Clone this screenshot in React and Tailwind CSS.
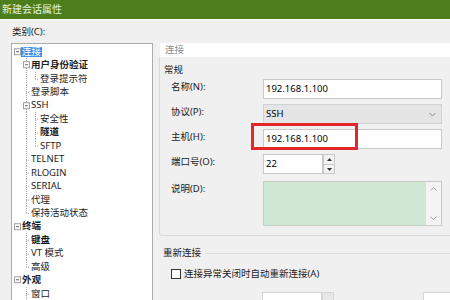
import React from "react";

const ROW_H = 13.44;

// tree rows: lvl, text, bold, box, col1/col2 = "full" | "last" | null
const rows = [
  { lvl: 0, text: "连接", box: true, selected: true },
  { lvl: 1, text: "用户身份验证", bold: true, box: true, col1: "full" },
  { lvl: 2, text: "登录提示符", col1: "full", col2: "last" },
  { lvl: 1, text: "登录脚本", col1: "full" },
  { lvl: 1, text: "SSH", box: true, col1: "full" },
  { lvl: 2, text: "安全性", col1: "full", col2: "full" },
  { lvl: 2, text: "隧道", bold: true, col1: "full", col2: "full" },
  { lvl: 2, text: "SFTP", col1: "full", col2: "last" },
  { lvl: 1, text: "TELNET", col1: "full" },
  { lvl: 1, text: "RLOGIN", col1: "full" },
  { lvl: 1, text: "SERIAL", col1: "full" },
  { lvl: 1, text: "代理", col1: "full" },
  { lvl: 1, text: "保持活动状态", col1: "last" },
  { lvl: 0, text: "终端", bold: true, box: true },
  { lvl: 1, text: "键盘", bold: true, col1: "full" },
  { lvl: 1, text: "VT 模式", col1: "full" },
  { lvl: 1, text: "高级", col1: "last" },
  { lvl: 0, text: "外观", bold: true, box: true },
  { lvl: 1, text: "窗口", col1: "full" },
];

const WIDTHS = [9, 18, 27];
const COLS = [5, 14, 23];

function Lines({ r }) {
  const w = WIDTHS[r.lvl];
  const mid = ROW_H / 2;
  const line = { stroke: "#a6a6a6", strokeWidth: 1, strokeDasharray: "1 1" };
  const vert = (x, kind) =>
    kind ? <line x1={x + 0.5} y1={0} x2={x + 0.5} y2={kind === "full" ? ROW_H : mid} {...line} /> : null;
  const own = COLS[r.lvl];
  return (
    <svg width={w} height={ROW_H} className="shrink-0">
      {vert(COLS[1], r.col1)}
      {vert(COLS[2], r.col2)}
      {!r.box && r.lvl > 0 && <line x1={own} y1={mid + 0.5} x2={w} y2={mid + 0.5} {...line} />}
      {r.box && (
        <g>
          <rect x={own - 2.5} y={mid - 3} width={6} height={6} fill="#fff" stroke="#a0a0a0" />
          <line x1={own - 1} y1={mid} x2={own + 2} y2={mid} stroke="#6a6a6a" />
        </g>
      )}
    </svg>
  );
}

function Tree() {
  return (
    <div className="flex-1 border border-[#acacac] bg-white pt-px">
      {rows.map((r, i) => (
        <div key={i} className="flex items-center h-[13.44px] whitespace-nowrap">
          <Lines r={r} />
          <span
            className={
              "px-px leading-[10px] " +
              (r.bold ? "font-bold " : "") +
              (r.selected ? "bg-[#3f8fe6] text-white" : "text-[#1c1c1c]")
            }
          >
            {r.text}
          </span>
        </div>
      ))}
    </div>
  );
}

function Field({ label, children, className = "" }) {
  return (
    <div className={"flex " + className}>
      <div className="w-[103px] shrink-0 pl-[11px] h-[20px] flex items-center pb-[4px] text-[#222]">{label}</div>
      {children}
    </div>
  );
}

const box = "h-[20px] border border-[#c9c9c9] bg-white flex items-center pl-[2px]";

export default function App() {
  return (
    <div className="w-[450px] h-[300px] overflow-hidden bg-[#f0f0f0] text-[9.5px] flex flex-col font-['Noto_Sans','Noto_Sans_CJK_SC',sans-serif]">
      <div className="h-[19px] shrink-0 bg-[#4d7e1b] text-[#eaf3dc] text-[10px] pl-[2px] flex items-center">新建会话属性</div>
      <div className="h-px shrink-0 bg-white" />

      <div className="flex flex-1 min-h-0">
        {/* left: category tree */}
        <div className="w-[153px] shrink-0 pl-[11px] flex flex-col">
          <div className="mt-[5px] h-[14px] leading-[14px] text-[#222] pl-[1px]">类别(C):</div>
          <div className="mt-[4px] flex-1 flex flex-col">
            <Tree />
          </div>
        </div>

        {/* right: properties */}
        <div className="ml-[6px] flex-1 flex flex-col">
          <div className="mt-[23px] ml-px h-[19px] bg-white text-[#8c8c8c] pl-[5px] flex items-center">连接</div>

          <div className="border-l border-b border-[#d9d9d9] rounded-bl-[3px] pb-[9px]">
            <div className="mt-[6px] h-[14px] leading-[14px] pl-[4px] text-[#222]">常规</div>

            <Field label="名称(N):" className="mt-[2px]">
              <div className={box + " w-[179px]"}>192.168.1.100</div>
            </Field>

            <Field label="协议(P):" className="mt-[5px]">
              <div className="w-[179px] h-[20px] border border-[#d2d2d2] bg-[#e5e5e5] flex items-center justify-between pl-[2px] pr-[5px]">
                <span>SSH</span>
                <svg width="7" height="5" viewBox="0 0 7 5">
                  <path d="M0.5 1 L3.5 4 L6.5 1" fill="none" stroke="#8a8a8a" strokeWidth="1" />
                </svg>
              </div>
            </Field>

            <Field label="主机(H):" className="mt-[5px]">
              <div className="relative">
                <div className={box + " w-[179px]"}>192.168.1.100</div>
                <div className="absolute left-[-12px] top-[-6px] w-[107px] h-[27px] border-[3px] border-[#e3262b]" />
              </div>
            </Field>

            <Field label="端口号(O):" className="mt-[5px]">
              <div className="flex">
                <div className={box + " w-[60px]"}>22</div>
                <div className="w-[12px] h-[20px] flex flex-col">
                  <div className="flex-1 border border-[#c9c9c9] bg-[#f3f3f3] flex items-center justify-center">
                    <svg width="5" height="3" viewBox="0 0 5 3"><path d="M0 3 L2.5 0 L5 3 Z" fill="#333" /></svg>
                  </div>
                  <div className="flex-1 border border-t-0 border-[#c9c9c9] bg-[#f3f3f3] flex items-center justify-center">
                    <svg width="5" height="3" viewBox="0 0 5 3"><path d="M0 0 L2.5 3 L5 0 Z" fill="#333" /></svg>
                  </div>
                </div>
              </div>
            </Field>

            <div className="flex mt-[7px]">
              <div className="w-[103px] shrink-0 pl-[11px] pt-[1px] text-[#222]">说明(D):</div>
              <div className="w-[179px] h-[45px] border border-[#c9c9c9] bg-[#cfe8d3] flex justify-end">
                <div className="w-[15px] h-full bg-[#f4f4f4] flex flex-col items-center justify-between py-[5px]">
                  <svg width="7" height="4" viewBox="0 0 7 4"><path d="M0.5 3.5 L3.5 0.5 L6.5 3.5" fill="none" stroke="#a0a0a0" /></svg>
                  <svg width="7" height="4" viewBox="0 0 7 4"><path d="M0.5 0.5 L3.5 3.5 L6.5 0.5" fill="none" stroke="#a0a0a0" /></svg>
                </div>
              </div>
            </div>
          </div>

          <div className="mt-[10px] h-[14px] flex items-center pl-[4px] gap-[4px]">
            <span className="text-[#222]">重新连接</span>
            <div className="flex-1 h-px bg-[#dedede]" />
          </div>

          <div className="mt-[7px] h-[14px] flex items-center pl-[12px] gap-[3px]">
            <div className="w-[10px] h-[10px] border border-[#333] bg-white" />
            <span className="text-[#222]">连接异常关闭时自动重新连接(A)</span>
          </div>

          <div className="mt-[11px] flex pl-[103px]">
            <div className="w-[60px] h-[20px] border border-[#d6d6d6] bg-white" />
            <div className="w-[12px] h-[20px] border border-[#d6d6d6] bg-[#e8e8e8]" />
            <div className="ml-[89px] w-[30px] h-[20px] border border-[#d6d6d6] bg-white" />
          </div>
        </div>
      </div>
    </div>
  );
}
